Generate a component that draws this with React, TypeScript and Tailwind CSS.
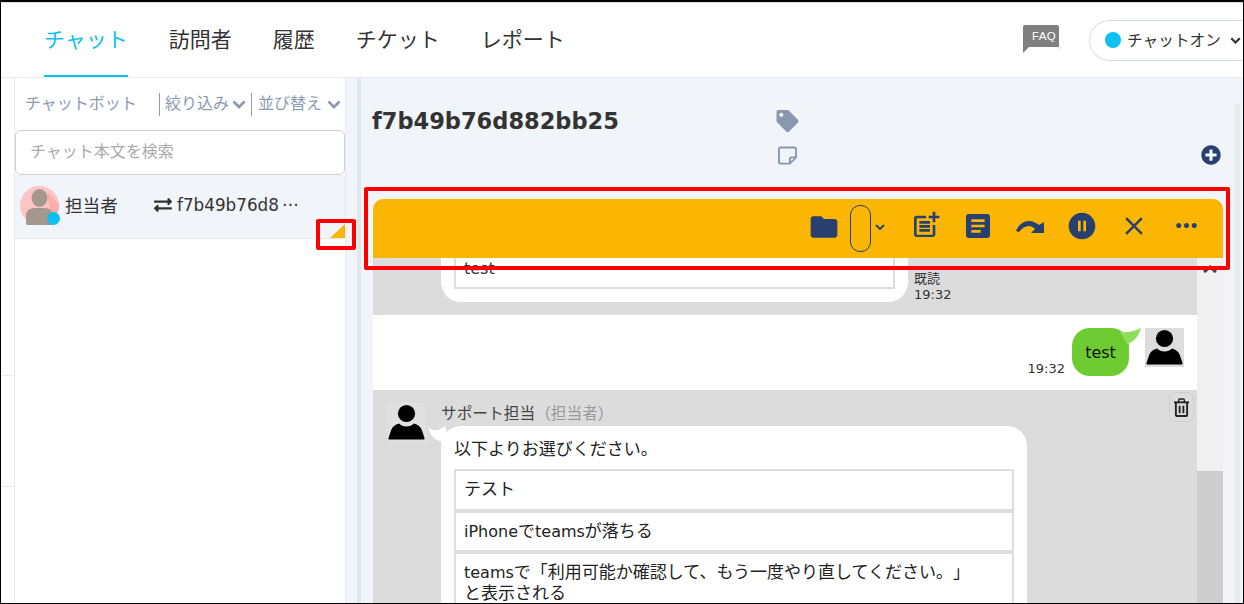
import { FaExchangeAlt, FaPlusCircle, FaTag } from 'react-icons/fa'
import { MdArticle, MdClose, MdFolder, MdMoreHoriz, MdOutlinePostAdd, MdPauseCircleFilled } from 'react-icons/md'

const font = "font-['DejaVu_Sans','Noto_Sans_CJK_JP',sans-serif]"

const tabs = ['チャット', '訪問者', '履歴', 'チケット', 'レポート']

function Chevron({ className }: { className: string }) {
  return (
    <svg viewBox="0 0 14 9" className={className} fill="none" stroke="currentColor" strokeWidth="2.800">
      <path d="M1.500 1.500L7 7l5.500-5.500" />
    </svg>
  )
}

function Person({ className }: { className: string }) {
  return (
    <div className={className}>
      <svg viewBox="0 0 39 39" className="h-full w-full">
        <circle cx="19.5" cy="10.5" r="8.6" fill="#000" />
        <path d="M12 20.5c2 2 4.500 3 7.500 3s5.500-1 7.500-3c4 1 6.500 3 8 7l2.500 7.500c.3 1-.3 1.500-1 1.500H2.500c-.8 0-1.300-.5-1-1.500L4 27.500c1.500-4 4-6 8-7z" fill="#000" />
      </svg>
    </div>
  )
}

function Header() {
  return (
    <header className="flex h-[75px] shrink-0 items-stretch border-t border-[#e2e2e2] bg-white pl-[43px]">
      <nav className="flex gap-[41px]">
        {tabs.map((tab, i) => (
          <div
            key={tab}
            className={`flex items-center border-b-2 pt-[4px] text-[21px] ${i === 0 ? 'border-[#0cc0ef] text-[#0cc0ef]' : 'border-transparent text-[#333]'}`}
          >
            {tab}
          </div>
        ))}
      </nav>
      <div className="ml-auto flex items-center">
        <div className="relative mb-[1px] mr-[29px] h-[29px] w-[37px]">
          <svg viewBox="0 0 37 29" className="absolute inset-0 h-full w-full">
            <path d="M4 20h33v6l-4-4H4z" fill="#eeeee6" />
            <path d="M2 0h32a2 2 0 0 1 2 2v19a1 1 0 0 1-1 1H6l-6 6V2a2 2 0 0 1 2-2z" fill="#808080" />
          </svg>
          <span className="absolute left-[9px] top-[3px] font-['Liberation_Sans',sans-serif] text-[11.500px] tracking-[0.3px] text-white">FAQ</span>
        </div>
        <div className="flex h-[41px] w-[170px] shrink-0 -mr-[16px] items-center rounded-l-full rounded-r-[20px] border border-[#d3ddf0] bg-white pl-[15px]">
          <span className="h-[16px] w-[16px] rounded-full bg-[#0cc0ef]" />
          <span className="ml-[6px] pt-[2px] text-[15.700px] text-[#333]">チャットオン</span>
          <Chevron className="ml-[9px] h-[7px] w-[11px] text-[#333]" />
        </div>
      </div>
    </header>
  )
}

function Sidebar() {
  return (
    <div className="flex w-[345px] shrink-0 bg-white">
      {/* left strip with the cut off rows */}
      <div className="flex w-[14px] shrink-0 flex-col border-r border-[#e4e9f2]">
        <div className="h-[298px] border-b border-[#e8ebf2]" />
        <div className="h-[111px] border-b border-[#e8ebf2]" />
      </div>
      <div className="flex min-w-0 flex-1 flex-col border-r border-[#e4e9f2]">
        <div className="flex h-[52px] items-center pl-[10px] text-[16px] text-[#8d9ab3]">
          <span className="w-[134px]">チャットボット</span>
          <span className="h-[23px] w-px bg-[#8d9ab3]" />
          <span className="ml-[5px]">絞り込み</span>
          <Chevron className="ml-[3px] h-[9px] w-[14px]" />
          <span className="ml-[5px] h-[23px] w-px bg-[#8d9ab3]" />
          <span className="ml-[6px]">並び替え</span>
          <Chevron className="ml-[5px] h-[9px] w-[14px]" />
        </div>
        <div className="flex h-[45px] items-center rounded-[6px] border border-[#cfcfcf] bg-white pb-[2px] pl-[14px] text-[16px] text-[#aaa]">
          チャット本文を検索
        </div>
        <div className="relative flex h-[64px] items-center border-b border-[#e4e9f2] bg-[#f1f4f9] pb-[3px] pl-[5px]">
          <div className="relative h-[39px] w-[39px] shrink-0">
            <svg viewBox="0 0 39 39" className="h-full w-full">
              <circle cx="19.500" cy="19.500" r="19.500" fill="#fdc6c6" />
              <path d="M27 6l12 12a19.500 19.500 0 0 1-8 17z" fill="#fbb0b0" />
              <ellipse cx="19.500" cy="12" rx="8" ry="9" fill="#a5988e" />
              <path d="M6 38V29c0-4 4-7 8-7h11c4 0 8 3 8 7v9a19.500 19.500 0 0 1-27 0z" fill="#a5988e" />
            </svg>
            <span className="absolute bottom-0 right-[-1px] h-[13px] w-[13px] rounded-full bg-[#0cc0ef]" />
          </div>
          <span className="ml-[6px] w-[89px] shrink-0 pt-[2px] text-[17.600px] text-[#333]">担当者</span>
          <FaExchangeAlt className="h-[18px] w-[18px] shrink-0 text-[#333]" />
          <span className="ml-[5px] whitespace-nowrap pt-[2px] text-[16.800px] text-[#333]">
            f7b49b76d8<span className="ml-[3px] inline-block -translate-y-[5px]">…</span>
          </span>
          {/* corner flag */}
          <div className="absolute bottom-0 right-0 h-0 w-0 border-b-[14px] border-l-[15px] border-b-[#fbb604] border-l-transparent" />
        </div>
      </div>
    </div>
  )
}

function Toolbar() {
  return (
    <div className="relative z-10 flex h-[59px] shrink-0 items-center rounded-t-[10px] bg-[#fbb604] text-[#27406f]">
      <div className="absolute left-[437px] top-[16px] h-[24px] w-[30px]">
        <MdFolder className="h-[32px] w-[32px] -translate-x-[2px] -translate-y-[4px]" />
      </div>
      <div className="absolute left-[477px] top-[6px] h-[47px] w-[21px] rounded-[10px] border border-[#27406f]" />
      <svg viewBox="0 0 10 6" className="absolute left-[502px] top-[25px] h-[6px] w-[10px]" fill="none" stroke="#27406f" strokeWidth="1.800">
        <path d="M1 1l4 4 4-4" />
      </svg>
      <MdOutlinePostAdd className="absolute left-[537px] top-[10px] h-[32px] w-[32px]" />
      <MdArticle className="absolute left-[589px] top-[11px] h-[32px] w-[32px]" />
      <svg viewBox="0 0 28 14" className="absolute left-[643px] top-[20px] h-[14px] w-[28px]" fill="#27406f">
        <path d="M0 12C3 5 8 2 13 2c4 0 7 2 10 4l5-3v11H15l4-4c-2-2-4-3-6-3-4 0-7 2-10 6z" />
      </svg>
      <MdPauseCircleFilled className="absolute left-[693px] top-[11px] h-[32px] w-[32px]" />
      <MdClose className="absolute left-[746px] top-[12px] h-[30px] w-[30px]" />
      <MdMoreHoriz className="absolute left-[798px] top-[11px] h-[31px] w-[31px]" />
    </div>
  )
}

function Trash({ className }: { className: string }) {
  return (
    <svg viewBox="0 0 16 20" className={className} fill="none" stroke="currentColor">
      <path d="M0 4.500h16" strokeWidth="2" />
      <path d="M5 4V2a1 1 0 0 1 1-1h4a1 1 0 0 1 1 1v2" strokeWidth="1.500" />
      <path d="M2 4.500V18a1 1 0 0 0 1 1h10a1 1 0 0 0 1-1V4.500" strokeWidth="2" />
      <path d="M6 8v8M10 8v8" strokeWidth="2" />
    </svg>
  )
}

function ChatRows() {
  return (
    <div className="flex min-w-0 flex-1 flex-col overflow-hidden">
      {/* first message, scrolled under the toolbar */}
      <div className="flex h-[57px] shrink-0 bg-[#dcdcdc] pl-[68px]">
        <div className="h-[44px] w-[467px] rounded-b-[20px] bg-white px-[13px]">
          <div className="flex h-[31px] items-start border-x-2 border-b-2 border-[#ddd] pl-[8px] pt-[1px] text-[16px] leading-[20px] text-[#333]">test</div>
        </div>
        <div className="ml-[6px] mt-[13px] text-[13px] leading-[16px] text-[#333]">
          <div>既読</div>
          <div>19:32</div>
        </div>
      </div>
      {/* own message */}
      <div className="flex h-[75px] shrink-0 justify-end bg-white pr-[13px] pt-[13px]">
        <span className="mr-[7px] mt-[33px] text-[13px] leading-[16px] text-[#333]">19:32</span>
        <div className="relative flex h-[48px] w-[57px] items-center justify-center rounded-[18px] bg-[#6ecc32] pt-[2px] text-[16px] text-[#111]">
          test
          <svg viewBox="0 0 22 16" className="absolute left-[48px] top-0 h-[16px] w-[22px]" fill="#8ede5a">
            <path d="M0 4c8 1 15-1 21-4-2 8-7 14-14 16z" />
          </svg>
        </div>
        <Person className="ml-[16px] h-[39px] w-[39px] bg-[#ddd]" />
      </div>
      {/* bot message with the options */}
      <div className="relative flex flex-1 bg-[#dcdcdc] pl-[14px] pt-[13px] [text-spacing-trim:space-all]">
        <Person className="h-[39px] w-[39px] shrink-0 bg-[#e0e0e0]" />
        <div className="ml-[15px] flex w-[586px] flex-col">
          <div className="h-[23px] text-[15.700px] leading-[22px] text-[#444]">
            サポート担当<span className="text-[#999]">（担当者）</span>
          </div>
          <div className="relative flex-1 rounded-t-[20px] bg-white px-[13px] pt-[11px] text-[17px] text-[#222]">
            <svg viewBox="0 0 18 16" className="absolute -left-[13px] top-0 h-[16px] w-[18px]" fill="#fff">
              <path d="M0 0c2 5 8 6 18 0v16C8 16 2 10 0 0z" />
            </svg>
            <div className="h-[32px] leading-[24px]">以下よりお選びください。</div>
            <div className="flex flex-col">
              <div className="flex h-[42px] items-center border-2 border-[#ddd] pl-[8px]">テスト</div>
              <div className="flex h-[41px] items-center border-2 border-[#ddd] pl-[8px]">
                <span className="text-[16px]">iPhone</span>で<span className="text-[16px]">teams</span>が落ちる
              </div>
              <div className="h-[60px] border-2 border-[#ddd] pl-[8px] pt-[8px] leading-[21px]">
                <span className="text-[16px]">teams</span>で「利用可能か確認して、もう一度やり直してください。」
                <br />
                と表示される
              </div>
            </div>
          </div>
        </div>
        <div className="absolute right-[3px] top-[2px] flex h-[30px] w-[25px] items-center justify-center rounded-[6px] border border-[#cfcfcf] text-[#222]">
          <Trash className="h-[19px] w-[15px]" />
        </div>
      </div>
    </div>
  )
}

function StickyNote({ className }: { className: string }) {
  return (
    <svg viewBox="0 0 20 20" className={className} fill="none" stroke="currentColor" strokeWidth="2">
      <path d="M12.500 18.500H3a2 2 0 0 1-2-2V3.500a2 2 0 0 1 2-2h14a2 2 0 0 1 2 2V12zM12.500 18.500V14a2 2 0 0 1 2-2H19" />
    </svg>
  )
}

function ChatPanel() {
  return (
    <div className="flex min-w-0 flex-1 bg-[#f1f4f9] pl-[12px]">
      <div className="flex w-[850px] shrink-0 flex-col">
        <div className="relative h-[121px] shrink-0">
          <h1 className="absolute -left-[1px] top-[28px] text-[22.500px] font-bold leading-[30px] text-[#333]">f7b49b76d882bb25</h1>
          <FaTag className="absolute left-[403px] top-[32px] h-[22px] w-[23px] text-[#8a97b1]" />
          <StickyNote className="absolute left-[405px] top-[68px] h-[19px] w-[19px] text-[#8a97b1]" />
          <FaPlusCircle className="absolute left-[828px] top-[67px] h-[20px] w-[20px] text-[#27406f]" />
        </div>
        <Toolbar />
        <div className="flex min-h-0 flex-1">
          <ChatRows />
          <div className="relative flex w-[26px] shrink-0 flex-col bg-[#f0f0f0]">
            <svg viewBox="0 0 14 8" className="absolute left-[6px] top-[7px] h-[8px] w-[14px]" fill="none" stroke="#444" strokeWidth="3">
              <path d="M1 7l6-5 6 5" />
            </svg>
            <div className="mt-[213px] flex-1 bg-[#cdcdcd]" />
          </div>
        </div>
      </div>
      <div className="ml-[12px] mt-[26px] w-[5px] shrink-0 bg-[#e4ebf0]" />
    </div>
  )
}

export default function App() {
  return (
    <div className={`relative flex h-[604px] w-[1244px] flex-col overflow-hidden border-x border-b border-t-2 border-black bg-white ${font}`}>
      <Header />
      <div className="flex min-h-0 flex-1 border-t border-[#e4e9f2]">
        <Sidebar />
        <div className="w-[11px] shrink-0 bg-[#f1f4f9]" />
        <div className="w-[4px] shrink-0 bg-[#e0e7ec]" />
        <ChatPanel />
      </div>
      {/* red annotation boxes */}
      <div className="absolute left-[315px] top-[217px] h-[31px] w-[40px] rounded-[2px] border-[4px] border-[#ff0000]" />
      <div className="absolute left-[363px] top-[185px] h-[83px] w-[866px] rounded-[2px] border-[4px] border-[#ff0000]" />
    </div>
  )
}
